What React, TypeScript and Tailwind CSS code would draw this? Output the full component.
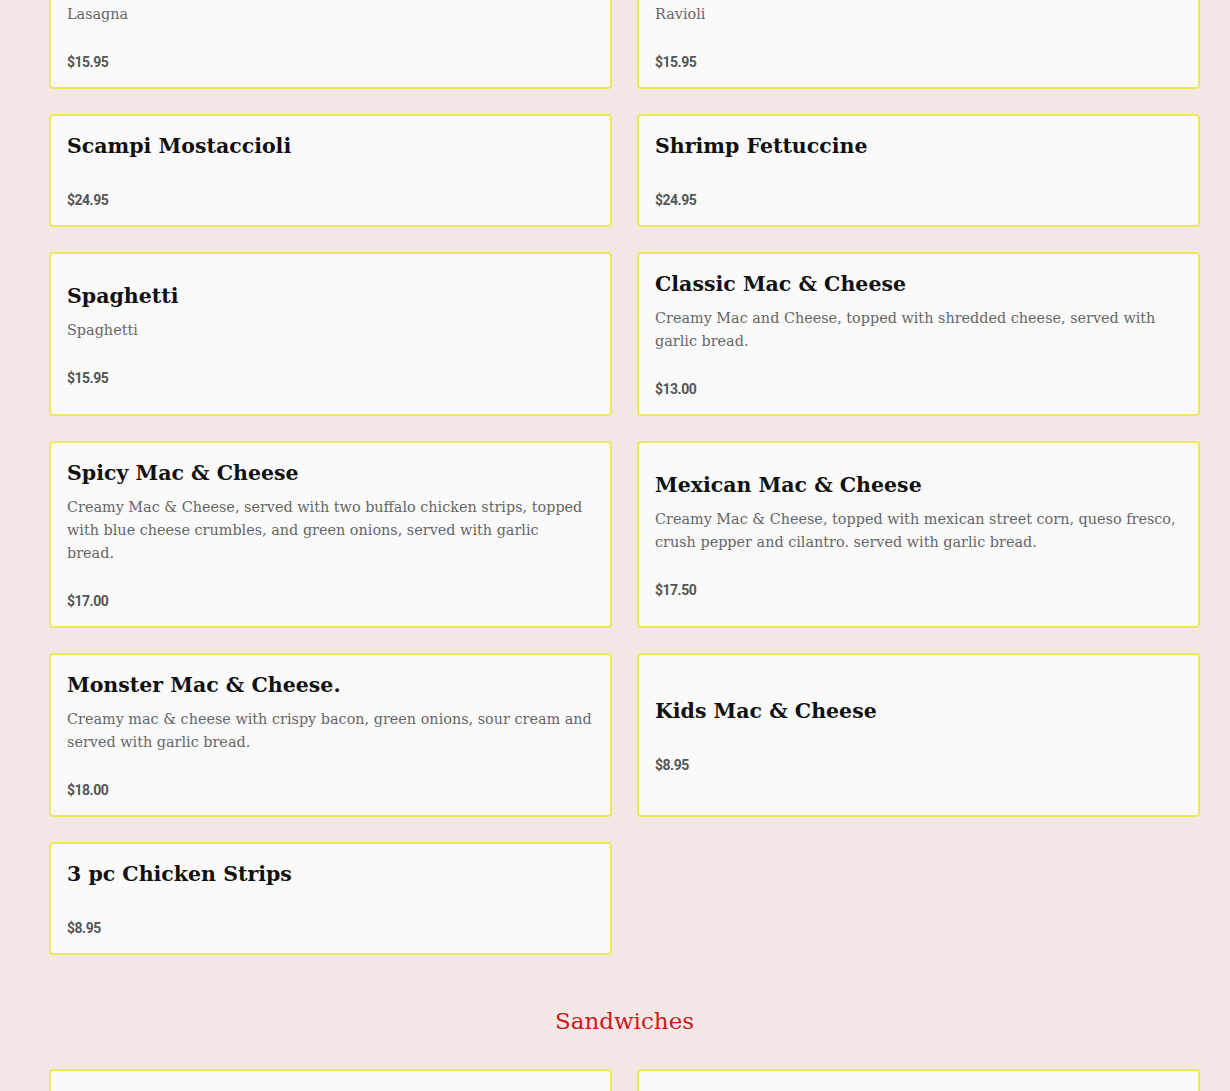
type Item = { name: string; desc?: string; price: string };

const pasta: Item[] = [
  { name: "Lasagna", desc: "Lasagna", price: "$15.95" },
  { name: "Ravioli", desc: "Ravioli", price: "$15.95" },
  { name: "Scampi Mostaccioli", price: "$24.95" },
  { name: "Shrimp Fettuccine", price: "$24.95" },
  { name: "Spaghetti", desc: "Spaghetti", price: "$15.95" },
  {
    name: "Classic Mac & Cheese",
    desc: "Creamy Mac and Cheese, topped with shredded cheese, served with garlic bread.",
    price: "$13.00",
  },
  {
    name: "Spicy Mac & Cheese",
    // keep the original wrap: "bread." sits on its own line
    desc: "Creamy Mac & Cheese, served with two buffalo chicken strips, topped with blue cheese crumbles, and green onions, served with garlic\nbread.",
    price: "$17.00",
  },
  {
    name: "Mexican Mac & Cheese",
    desc: "Creamy Mac & Cheese, topped with mexican street corn, queso fresco, crush pepper and cilantro. served with garlic bread.",
    price: "$17.50",
  },
  {
    name: "Monster Mac & Cheese.",
    desc: "Creamy mac & cheese with crispy bacon, green onions, sour cream and served with garlic bread.",
    price: "$18.00",
  },
  { name: "Kids Mac & Cheese", price: "$8.95" },
  { name: "3 pc Chicken Strips", price: "$8.95" },
];

const sandwiches: Item[] = [
  { name: "Italian Beef", desc: "Served with fries.", price: "$12.95" },
  { name: "Meatball Sub", desc: "Served with fries.", price: "$11.95" },
];

function Card({ item }: { item: Item }) {
  return (
    <div className="flex flex-col justify-center rounded-[4px] border-2 border-[#ece85e] bg-[#fafafa] px-4 pb-[15px] pt-4">
      <h3 className="mb-2 text-[20.5px] font-bold leading-[29px] text-[#111]">{item.name}</h3>
      {item.desc && (
        <p className="mb-[5px] whitespace-pre-line text-[14.4px] leading-[23px] text-[#666]">
          {item.desc}
        </p>
      )}
      <div className="mt-[21px] font-['Roboto',sans-serif] text-[14px] font-bold leading-[20px] tracking-[-0.5px] text-[#555]">
        {item.price}
      </div>
    </div>
  );
}

export default function App() {
  return (
    <div className="min-h-screen overflow-hidden bg-[#f4e8e6] font-['DejaVu_Serif',serif]">
      <div className="-mt-[52px] pb-10 pl-[49px] pr-[30px]">
        <div className="grid grid-cols-2 gap-[25px]">
          {pasta.map((it) => (
            <Card key={it.name} item={it} />
          ))}
        </div>

        <h2 className="mb-[30px] mt-[48px] text-center text-[23px] leading-[36px] text-[#cc1a1a]">
          Sandwiches
        </h2>

        <div className="grid grid-cols-2 gap-[25px]">
          {sandwiches.map((it) => (
            <Card key={it.name} item={it} />
          ))}
        </div>
      </div>
    </div>
  );
}
